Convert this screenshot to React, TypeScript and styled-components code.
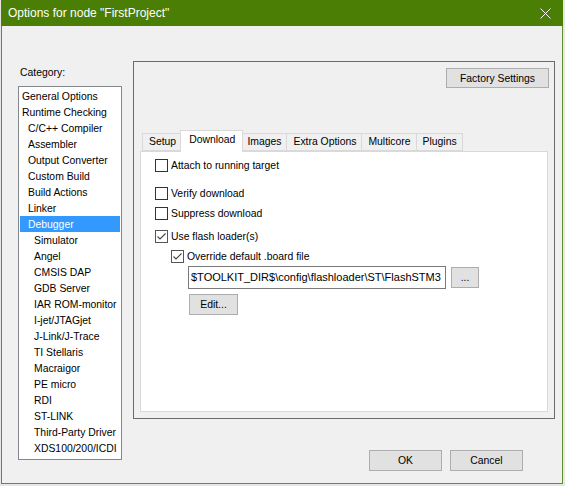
import React from "react"
import styled, { createGlobalStyle } from "styled-components"

const categories: { label: string; level: number }[] = [
    { label: "General Options", level: 0 },
    { label: "Runtime Checking", level: 0 },
    { label: "C/C++ Compiler", level: 1 },
    { label: "Assembler", level: 1 },
    { label: "Output Converter", level: 1 },
    { label: "Custom Build", level: 1 },
    { label: "Build Actions", level: 1 },
    { label: "Linker", level: 1 },
    { label: "Debugger", level: 1 },
    { label: "Simulator", level: 2 },
    { label: "Angel", level: 2 },
    { label: "CMSIS DAP", level: 2 },
    { label: "GDB Server", level: 2 },
    { label: "IAR ROM-monitor", level: 2 },
    { label: "I-jet/JTAGjet", level: 2 },
    { label: "J-Link/J-Trace", level: 2 },
    { label: "TI Stellaris", level: 2 },
    { label: "Macraigor", level: 2 },
    { label: "PE micro", level: 2 },
    { label: "RDI", level: 2 },
    { label: "ST-LINK", level: 2 },
    { label: "Third-Party Driver", level: 2 },
    { label: "XDS100/200/ICDI", level: 2 },
]

const tabs = ["Setup", "Download", "Images", "Extra Options", "Multicore", "Plugins"]

const CheckBox: React.FC<{ checked?: boolean }> = ({ checked }) => (
    <S.Box $checked={checked}>
        {checked && (
            <svg width="11" height="11" viewBox="0 0 11 11">
                <polyline points="1.5,5.5 4,8 9.5,2.5" fill="none" stroke="#444" strokeWidth="1.1" />
            </svg>
        )}
    </S.Box>
)

const CheckRow: React.FC<{ label: string; checked?: boolean; gap: number; indent?: boolean }> = ({
    label,
    checked,
    gap,
    indent,
}) => (
    <S.CheckRow $gap={gap} $indent={indent}>
        <CheckBox checked={checked} />
        <span>{label}</span>
    </S.CheckRow>
)

export default function App() {
    return (
        <>
            <GlobalStyle />
            <S.Dialog>
                <S.TitleBar>
                    <span>Options for node "FirstProject"</span>
                    <S.Close>
                        <svg width="11" height="11" viewBox="0 0 11 11">
                            <path d="M0.5 0.5 L10.5 10.5 M10.5 0.5 L0.5 10.5" stroke="#fff" strokeWidth="1" />
                        </svg>
                    </S.Close>
                </S.TitleBar>
                <S.Body>
                    <S.LeftCol>
                        <S.Label>Category:</S.Label>
                        <S.ListBox>
                            {categories.map((c) => (
                                <S.ListItem key={c.label} $level={c.level} $selected={c.label === "Debugger"}>
                                    {c.label}
                                </S.ListItem>
                            ))}
                        </S.ListBox>
                    </S.LeftCol>
                    <S.RightCol>
                        <S.Frame>
                            <S.TopBar>
                                <S.Button $w={103} $h={20}>Factory Settings</S.Button>
                            </S.TopBar>
                            <S.TabStrip>
                                {tabs.map((t) => (
                                    <S.Tab key={t} $active={t === "Download"}>
                                        {t}
                                    </S.Tab>
                                ))}
                            </S.TabStrip>
                            <S.Page>
                                <CheckRow label="Attach to running target" gap={7} />
                                <CheckRow label="Verify download" gap={15} />
                                <CheckRow label="Suppress download" gap={7} />
                                <CheckRow label="Use flash loader(s)" checked gap={10} />
                                <CheckRow label="Override default .board file" checked gap={7} indent />
                                <S.PathRow>
                                    <S.PathInput>$TOOLKIT_DIR$\config\flashloader\ST\FlashSTM3</S.PathInput>
                                    <S.Button $w={28} $h={21}>...</S.Button>
                                </S.PathRow>
                                <S.EditButton $w={49} $h={21}>Edit...</S.EditButton>
                            </S.Page>
                        </S.Frame>
                        <S.Footer>
                            <S.Button $w={73} $h={21}>OK</S.Button>
                            <S.Button $w={73} $h={21}>Cancel</S.Button>
                        </S.Footer>
                    </S.RightCol>
                </S.Body>
            </S.Dialog>
        </>
    )
}

const GlobalStyle = createGlobalStyle`
    html, body {
        margin: 0;
        padding: 0;
        background: #e6e6e6;
    }
    body {
        width: 565px;
        height: 486px;
        overflow: hidden;
        font-family: "Liberation Sans", Arial, sans-serif;
        font-size: 10.4px;
        color: #000;
    }
`

const S = {
    Dialog: styled.div`
        width: 562px;
        height: 484px;
        margin-left: 1px;
        box-sizing: border-box;
        border: 1px solid #5f8f2b;
        border-top: none;
        background: #f0f0f0;
        display: flex;
        flex-direction: column;
    `,
    TitleBar: styled.div`
        height: 26px;
        margin: 0 -1px;
        padding: 0 12px 0 7px;
        background: #4a7e04;
        color: #fff;
        font-size: 12px;
        display: flex;
        align-items: center;
        justify-content: space-between;
    `,
    Close: styled.span`
        display: flex;
        align-items: center;
    `,
    Body: styled.div`
        display: flex;
        padding: 35px 0 0 16px;
    `,
    LeftCol: styled.div`
        width: 104px;
        display: flex;
        flex-direction: column;
    `,
    Label: styled.div`
        margin: 5px 0 7px 2px;
        line-height: 13px;
    `,
    ListBox: styled.div`
        height: 374px;
        box-sizing: border-box;
        border: 1px solid #828790;
        background: #fff;
        padding: 1px;
    `,
    ListItem: styled.div<{ $level: number; $selected?: boolean }>`
        height: 16px;
        line-height: 17px;
        white-space: nowrap;
        padding-left: ${(p) => 2 + p.$level * 6}px;
        background: ${(p) => (p.$selected ? "#3399ff" : "transparent")};
        color: ${(p) => (p.$selected ? "#fff" : "#000")};
    `,
    RightCol: styled.div`
        width: 422px;
        margin-left: 11px;
        display: flex;
        flex-direction: column;
    `,
    Frame: styled.div`
        height: 358px;
        box-sizing: border-box;
        border: 1px solid #6a6a6a;
        padding: 0 6px 6px 6px;
        display: flex;
        flex-direction: column;
    `,
    TopBar: styled.div`
        display: flex;
        justify-content: flex-end;
        margin: 6px -1px 0 0;
    `,
    Button: styled.div<{ $w: number; $h: number }>`
        width: ${(p) => p.$w}px;
        height: ${(p) => p.$h}px;
        box-sizing: border-box;
        border: 1px solid #adadad;
        background: #e1e1e1;
        display: flex;
        align-items: center;
        justify-content: center;
        flex-shrink: 0;
    `,
    TabStrip: styled.div`
        height: 21px;
        margin-top: 42px;
        padding-left: 2px;
        display: flex;
        align-items: flex-end;
    `,
    Tab: styled.div<{ $active?: boolean }>`
        position: relative;
        box-sizing: border-box;
        height: ${(p) => (p.$active ? 22 : 18)}px;
        line-height: ${(p) => (p.$active ? 18 : 16)}px;
        padding: ${(p) => (p.$active ? "0 7px 0 8px" : "0 5px 0 6px")};
        margin: 0 ${(p) => (p.$active ? -2 : 0)}px ${(p) => (p.$active ? -1 : 0)}px ${(p) => (p.$active ? -2 : -1)}px;
        border: 1px solid #d9d9d9;
        border-bottom: ${(p) => (p.$active ? "none" : "1px solid #d9d9d9")};
        background: ${(p) => (p.$active ? "#fff" : "#f0f0f0")};
        z-index: ${(p) => (p.$active ? 1 : 0)};
        white-space: nowrap;
        &:first-child {
            margin-left: 0;
        }
    `,
    Page: styled.div`
        flex: 1;
        box-sizing: border-box;
        border: 1px solid #d9d9d9;
        background: #fff;
        padding: 0 0 0 14px;
        display: flex;
        flex-direction: column;
        align-items: flex-start;
    `,
    CheckRow: styled.div<{ $gap: number; $indent?: boolean }>`
        display: flex;
        align-items: center;
        height: 13px;
        gap: 3px;
        margin-top: ${(p) => p.$gap}px;
        margin-left: ${(p) => (p.$indent ? 16 : 0)}px;
        white-space: nowrap;
    `,
    Box: styled.span<{ $checked?: boolean }>`
        width: 13px;
        height: 13px;
        box-sizing: border-box;
        border: 1px solid ${(p) => (p.$checked ? "#555" : "#333")};
        background: #fff;
        display: flex;
        align-items: center;
        justify-content: center;
    `,
    PathRow: styled.div`
        display: flex;
        align-items: center;
        margin: 3px 0 0 33px;
        gap: 5px;
    `,
    PathInput: styled.div`
        width: 258px;
        height: 23px;
        box-sizing: border-box;
        border: 1px solid #7a7a7a;
        padding: 0 2px;
        font-size: 11px;
        line-height: 21px;
        white-space: nowrap;
        overflow: hidden;
    `,
    EditButton: styled.div<{ $w: number; $h: number }>`
        width: ${(p) => p.$w}px;
        height: ${(p) => p.$h}px;
        box-sizing: border-box;
        margin: 5px 0 0 34px;
        border: 1px solid #adadad;
        background: #e1e1e1;
        display: flex;
        align-items: center;
        justify-content: center;
    `,
    Footer: styled.div`
        display: flex;
        justify-content: flex-end;
        gap: 8px;
        margin-top: 31px;
        padding-right: 32px;
    `,
}
